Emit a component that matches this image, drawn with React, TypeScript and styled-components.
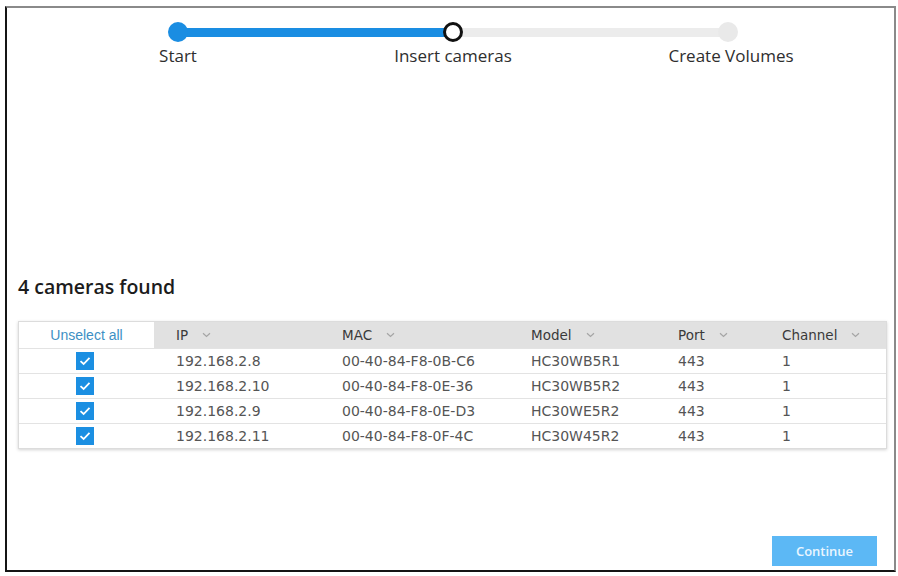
import React from 'react';
import styled, { createGlobalStyle } from 'styled-components';

const GlobalStyle = createGlobalStyle`
  html, body {
    margin: 0;
    padding: 0;
    background: #ffffff;
  }
  body {
    font-family: 'Open Sans', 'Liberation Sans', sans-serif;
  }
`;

const Frame = styled.div`
  box-sizing: border-box;
  margin: 6px 0 0 5px;
  width: 891px;
  height: 566px;
  border-left: 2px solid #151515;
  border-bottom: 2px solid #151515;
  border-top: 2px solid #8a8a8a;
  border-right: 2px solid #8a8a8a;
  display: flex;
  flex-direction: column;
  padding: 0 7px 0 11px;
`;

const Stepper = styled.div`
  display: grid;
  grid-template-columns: 20px 1fr 20px 1fr 20px;
  grid-template-rows: 20px auto;
  row-gap: 4px;
  width: 570px;
  margin: 14px 0 0 150px;
`;

const Dot = styled.div<{ $state: 'done' | 'current' | 'todo' }>`
  position: relative;
  z-index: 1;
  box-sizing: border-box;
  width: 20px;
  height: 20px;
  border-radius: 50%;
  background: ${(p) => (p.$state === 'done' ? '#1a8de2' : p.$state === 'current' ? '#ffffff' : '#e9e9e9')};
  border: ${(p) => (p.$state === 'current' ? '3px solid #111111' : 'none')};
`;

const Segment = styled.div<{ $active?: boolean }>`
  align-self: center;
  height: 9px;
  margin: 0 -6px;
  background: ${(p) => (p.$active ? '#1a8de2' : '#ececec')};
`;

const StepLabel = styled.div<{ $shift?: number }>`
  display: flex;
  justify-content: center;
  width: 20px;
  margin-left: ${(p) => p.$shift ?? 0}px;
  white-space: nowrap;
  font-size: 17px;
  line-height: 20px;
  color: #2e2e2e;
`;

const Heading = styled.h2`
  margin: 209px 0 0 0;
  font-size: 19.5px;
  line-height: 24px;
  font-weight: 600;
  color: #1c1c1c;
`;

const Table = styled.div`
  margin-top: 22px;
  border: 1px solid #dcdcdc;
  box-shadow: 0 1px 3px rgba(0, 0, 0, 0.18);
  font-family: 'DejaVu Sans', sans-serif;
`;

const Row = styled.div<{ $head?: boolean }>`
  display: grid;
  grid-template-columns: 135px 166px 189px 147px 104px 1fr;
  height: ${(p) => (p.$head ? '26px' : '24px')};
  align-items: center;
  background: ${(p) => (p.$head ? '#e1e1e1' : '#ffffff')};
  & + & {
    border-top: 1px solid #e3e3e3;
  }
`;

const SelectCell = styled.div`
  height: 100%;
  display: flex;
  align-items: center;
  justify-content: center;
  background: #ffffff;
`;

const UnselectAll = styled.button`
  border: none;
  background: none;
  padding: 0;
  font-family: 'Liberation Sans', sans-serif;
  font-size: 14px;
  color: #3d8fc4;
  cursor: pointer;
`;

const HeadCell = styled.div`
  display: flex;
  align-items: center;
  gap: 14px;
  padding-left: 22px;
  font-size: 13.5px;
  font-weight: 500;
  color: #3a3a3a;
`;

const Cell = styled.div`
  padding-left: 22px;
  font-size: 14px;
  color: #555555;
  white-space: nowrap;
`;

const Check = styled.span`
  display: flex;
  align-items: center;
  justify-content: center;
  width: 18px;
  height: 18px;
  margin-right: 3px;
  background: #1b8fe2;
`;

const Footer = styled.div`
  margin-top: auto;
  display: flex;
  justify-content: flex-end;
  padding: 0 10px 4px 0;
`;

const ContinueButton = styled.button`
  width: 105px;
  height: 30px;
  border: none;
  background: #5cb8f5;
  color: #eaf6ff;
  font-family: 'Open Sans', sans-serif;
  font-size: 13px;
  font-weight: 600;
`;

const Chevron = () => (
  <svg width="9" height="6" viewBox="0 0 9 6">
    <path d="M1 1.2 L4.5 4.5 L8 1.2" fill="none" stroke="#a5a5a5" strokeWidth="1.2" />
  </svg>
);

const Tick = () => (
  <svg width="12" height="10" viewBox="0 0 12 10">
    <path d="M1.5 5.2 L4.6 8 L10.5 1.8" fill="none" stroke="#ffffff" strokeWidth="1.8" />
  </svg>
);

const cameras = [
  { ip: '192.168.2.8', mac: '00-40-84-F8-0B-C6', model: 'HC30WB5R1', port: '443', channel: '1' },
  { ip: '192.168.2.10', mac: '00-40-84-F8-0E-36', model: 'HC30WB5R2', port: '443', channel: '1' },
  { ip: '192.168.2.9', mac: '00-40-84-F8-0E-D3', model: 'HC30WE5R2', port: '443', channel: '1' },
  { ip: '192.168.2.11', mac: '00-40-84-F8-0F-4C', model: 'HC30W45R2', port: '443', channel: '1' },
];

const columns = ['IP', 'MAC', 'Model', 'Port', 'Channel'];

const App = () => (
  <>
    <GlobalStyle />
    <Frame>
      <Stepper>
        <Dot $state="done" />
        <Segment $active />
        <Dot $state="current" />
        <Segment />
        <Dot $state="todo" />
        <StepLabel>Start</StepLabel>
        <span />
        <StepLabel>Insert cameras</StepLabel>
        <span />
        <StepLabel $shift={3}>Create Volumes</StepLabel>
      </Stepper>

      <Heading>4 cameras found</Heading>

      <Table>
        <Row $head>
          <SelectCell>
            <UnselectAll>Unselect all</UnselectAll>
          </SelectCell>
          {columns.map((c) => (
            <HeadCell key={c}>
              {c}
              <Chevron />
            </HeadCell>
          ))}
        </Row>
        {cameras.map((cam) => (
          <Row key={cam.ip}>
            <SelectCell>
              <Check>
                <Tick />
              </Check>
            </SelectCell>
            <Cell>{cam.ip}</Cell>
            <Cell>{cam.mac}</Cell>
            <Cell>{cam.model}</Cell>
            <Cell>{cam.port}</Cell>
            <Cell>{cam.channel}</Cell>
          </Row>
        ))}
      </Table>

      <Footer>
        <ContinueButton>Continue</ContinueButton>
      </Footer>
    </Frame>
  </>
);

export default App;
